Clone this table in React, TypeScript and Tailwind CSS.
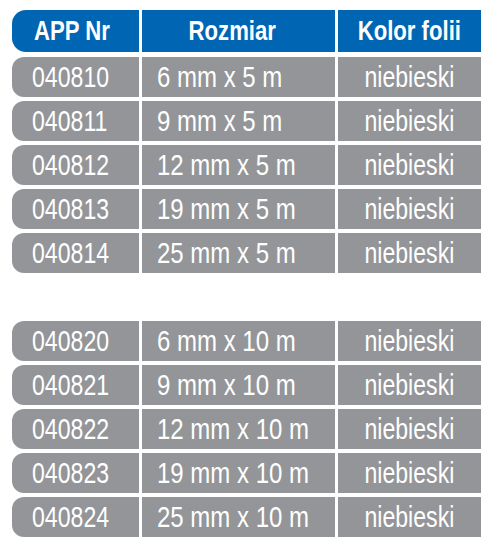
const GROUPS = [
  [
    ["040810", "6 mm x 5 m"],
    ["040811", "9 mm x 5 m"],
    ["040812", "12 mm x 5 m"],
    ["040813", "19 mm x 5 m"],
    ["040814", "25 mm x 5 m"],
  ],
  [
    ["040820", "6 mm x 10 m"],
    ["040821", "9 mm x 10 m"],
    ["040822", "12 mm x 10 m"],
    ["040823", "19 mm x 10 m"],
    ["040824", "25 mm x 10 m"],
  ],
]

// condensed look: no narrow face installed, so squeeze Liberation Sans
const font = { fontFamily: '"Liberation Sans", Arial, sans-serif' }

function Row({ nr, size }: { nr: string; size: string }) {
  return (
    <div className="grid grid-cols-[127px_193px_143px] gap-[3px] h-10 text-white text-[30px] leading-none">
      <div className="flex items-center bg-[#939598] rounded-l-[12px] pl-5">
        <span className="inline-block whitespace-nowrap origin-left scale-x-[0.77]">{nr}</span>
      </div>
      <div className="flex items-center bg-[#939598] pl-[15px]">
        <span className="inline-block whitespace-nowrap origin-left scale-x-[0.8]">{size}</span>
      </div>
      <div className="flex items-center justify-center bg-[#939598]">
        <span className="inline-block whitespace-nowrap origin-center scale-x-[0.77]">niebieski</span>
      </div>
    </div>
  )
}

export default function App() {
  return (
    <div className="bg-white w-[483px] h-[552px] pl-3 pt-[10px]" style={font}>
      <div className="grid grid-cols-[127px_193px_143px] gap-[3px] h-[42px] text-white text-[28px] font-bold leading-none">
        <div className="flex items-center justify-center bg-[#0066b3] rounded-l-[14px] pr-2">
          <span className="inline-block whitespace-nowrap scale-x-[0.79]">APP Nr</span>
        </div>
        <div className="flex items-center justify-center bg-[#0066b3] pr-3">
          <span className="inline-block whitespace-nowrap scale-x-[0.79]">Rozmiar</span>
        </div>
        <div className="flex items-center justify-center bg-[#0066b3]">
          <span className="inline-block whitespace-nowrap scale-x-[0.79]">Kolor folii</span>
        </div>
      </div>
      <div className="flex flex-col gap-[48px] mt-[5px]">
        {GROUPS.map((g, gi) => (
          <div key={gi} className="flex flex-col gap-1">
            {g.map(([nr, size]) => (
              <Row key={nr} nr={nr} size={size} />
            ))}
          </div>
        ))}
      </div>
    </div>
  )
}
